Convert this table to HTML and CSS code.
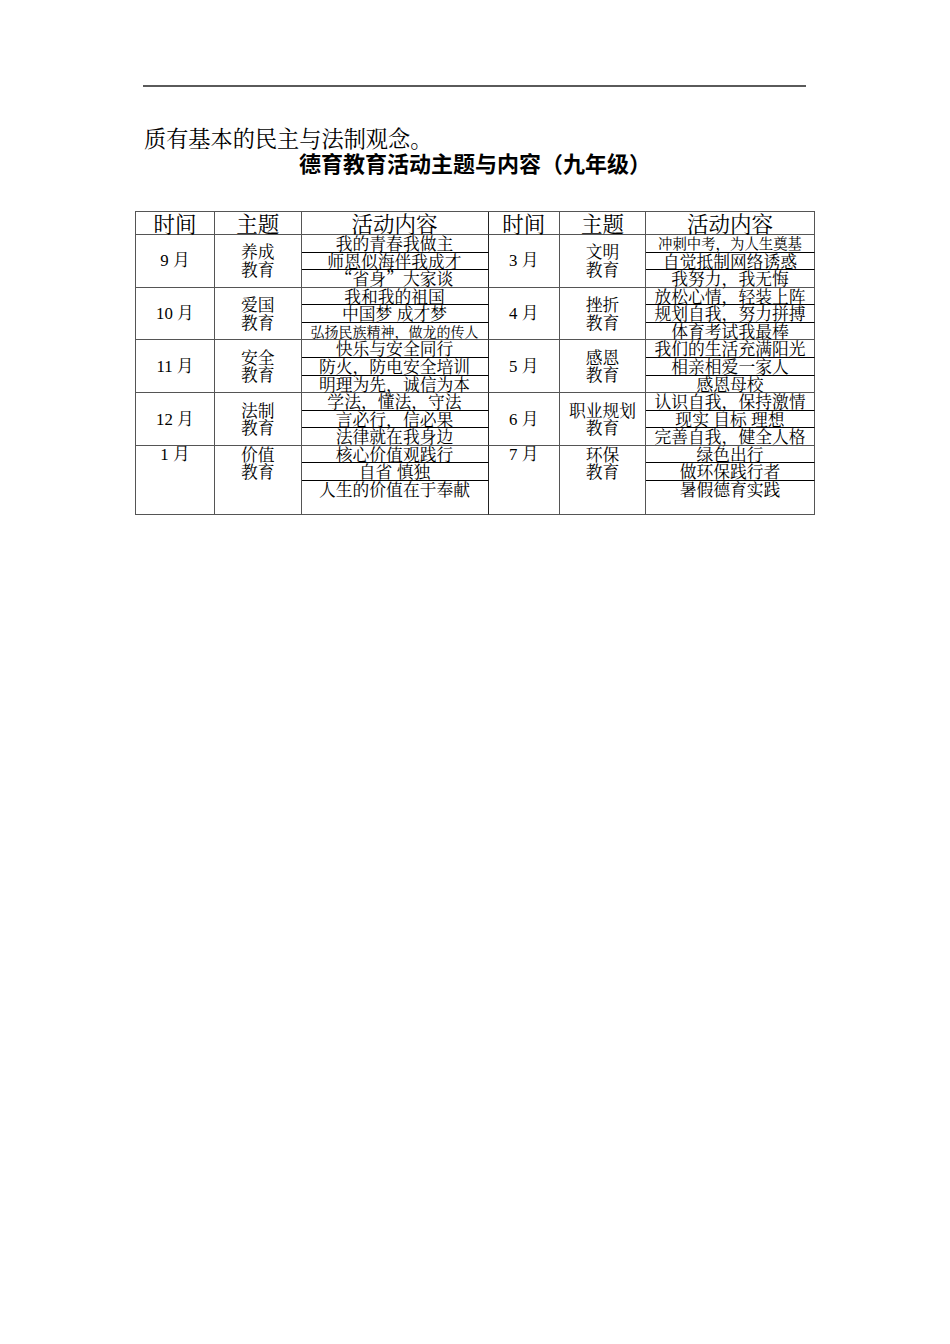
FILE: index.html
```html
<!DOCTYPE html>
<html lang="zh-CN">
<head>
<meta charset="utf-8">
<title>德育教育活动主题与内容（九年级）</title>
<link rel="stylesheet" href="styles.css">
</head>
<body>
<div class="page">
  <div class="rule"></div>
  <p class="intro">质有基本的民主与法制观念。</p>
  <h1 class="title">德育教育活动主题与内容（九年级）</h1>
  <div class="grid">
    <div class="c head">时间</div>
    <div class="c head">主题</div>
    <div class="c head act-l">活动内容</div>
    <div class="c head">时间</div>
    <div class="c head">主题</div>
    <div class="c head">活动内容</div>

    <div class="c month">9 月</div>
    <div class="c theme">养成<br>教育</div>
    <div class="c act sub act-l">我的青春我做主</div>
    <div class="c month">3 月</div>
    <div class="c theme">文明<br>教育</div>
    <div class="c act sub small2">冲刺中考，为人生奠基</div>
    <div class="c act sub act-l">师恩似海伴我成才</div>
    <div class="c act sub">自觉抵制网络诱惑</div>
    <div class="c act act-l">“省身”大家谈</div>
    <div class="c act">我努力，我无悔</div>

    <div class="c month">10 月</div>
    <div class="c theme">爱国<br>教育</div>
    <div class="c act sub act-l">我和我的祖国</div>
    <div class="c month">4 月</div>
    <div class="c theme">挫折<br>教育</div>
    <div class="c act sub">放松心情，轻装上阵</div>
    <div class="c act sub act-l">中国梦 成才梦</div>
    <div class="c act sub">规划自我，努力拼搏</div>
    <div class="c act act-l small">弘扬民族精神，做龙的传人</div>
    <div class="c act">体育考试我最棒</div>

    <div class="c month">11 月</div>
    <div class="c theme">安全<br>教育</div>
    <div class="c act sub act-l">快乐与安全同行</div>
    <div class="c month">5 月</div>
    <div class="c theme">感恩<br>教育</div>
    <div class="c act sub">我们的生活充满阳光</div>
    <div class="c act sub act-l">防火，防电安全培训</div>
    <div class="c act sub">相亲相爱一家人</div>
    <div class="c act act-l">明理为先，诚信为本</div>
    <div class="c act">感恩母校</div>

    <div class="c month">12 月</div>
    <div class="c theme">法制<br>教育</div>
    <div class="c act sub act-l">学法，懂法，守法</div>
    <div class="c month">6 月</div>
    <div class="c theme">职业规划<br>教育</div>
    <div class="c act sub">认识自我，保持激情</div>
    <div class="c act sub act-l">言必行，信必果</div>
    <div class="c act sub">现实 目标 理想</div>
    <div class="c act act-l">法律就在我身边</div>
    <div class="c act">完善自我，健全人格</div>

    <div class="c month top">1 月</div>
    <div class="c theme top">价值<br>教育</div>
    <div class="c act sub act-l">核心价值观践行</div>
    <div class="c month top">7 月</div>
    <div class="c theme top">环保<br>教育</div>
    <div class="c act sub">绿色出行</div>
    <div class="c act sub act-l">自省 慎独</div>
    <div class="c act sub">做环保践行者</div>
    <div class="c act act-l">人生的价值在于奉献</div>
    <div class="c act">暑假德育实践</div>
  </div>
</div>
</body>
</html>
```

FILE: styles.css
```css
html, body {
  margin: 0;
  padding: 0;
  background: #ffffff;
}

.page {
  width: 950px;
  height: 1344px;
  overflow: hidden;
  color: #000;
  font-family: "Noto Serif CJK SC", "Noto Sans CJK SC", serif;
}

.rule {
  margin: 85px 0 0 143px;
  width: 663px;
  height: 2px;
  background: #5a5a5a;
}

.intro {
  margin: 38px 0 0 144px;
  font-size: 22.2px;
  line-height: 24px;
  white-space: nowrap;
}

.title {
  margin: 1px 0 0 144px;
  width: 662px;
  text-align: center;
  font-family: "Noto Sans CJK SC", sans-serif;
  font-weight: 700;
  font-size: 22px;
  line-height: 24px;
  white-space: nowrap;
}

.grid {
  display: grid;
  grid-template-columns: 79px 86.5px 187px 71.5px 86px 169px;
  grid-template-rows: 23px repeat(12, 17.583px) 17px 17.7px 34.3px;
  margin: 37px 0 0 135px;
  width: 679px;
  border-top: 1px solid #555;
  border-left: 1px solid #555;
}

.c {
  box-sizing: border-box;
  border-right: 1px solid #555;
  border-bottom: 1px solid #555;
  text-align: center;
  white-space: nowrap;
}

.head {
  font-size: 21.5px;
  line-height: 22px;
}

.month {
  grid-row: span 3;
  display: flex;
  align-items: center;
  justify-content: center;
  font-family: "Liberation Serif", "Noto Serif CJK SC", "Noto Sans CJK SC", serif;
  font-size: 16.8px;
  line-height: 17px;
}

.theme {
  grid-row: span 3;
  display: flex;
  align-items: center;
  justify-content: center;
  font-size: 16.8px;
  line-height: 17.5px;
}

.month.top,
.theme.top {
  align-items: flex-start;
  padding-top: 0;
}

.act {
  font-size: 16.8px;
  line-height: 16.5px;
  overflow: visible;
}

.act-l {
  border-right-color: #222;
}

.sub {
  border-bottom-color: #000;
}

.small {
  font-size: 14px;
}

.small2 {
  font-size: 14.4px;
}
```
